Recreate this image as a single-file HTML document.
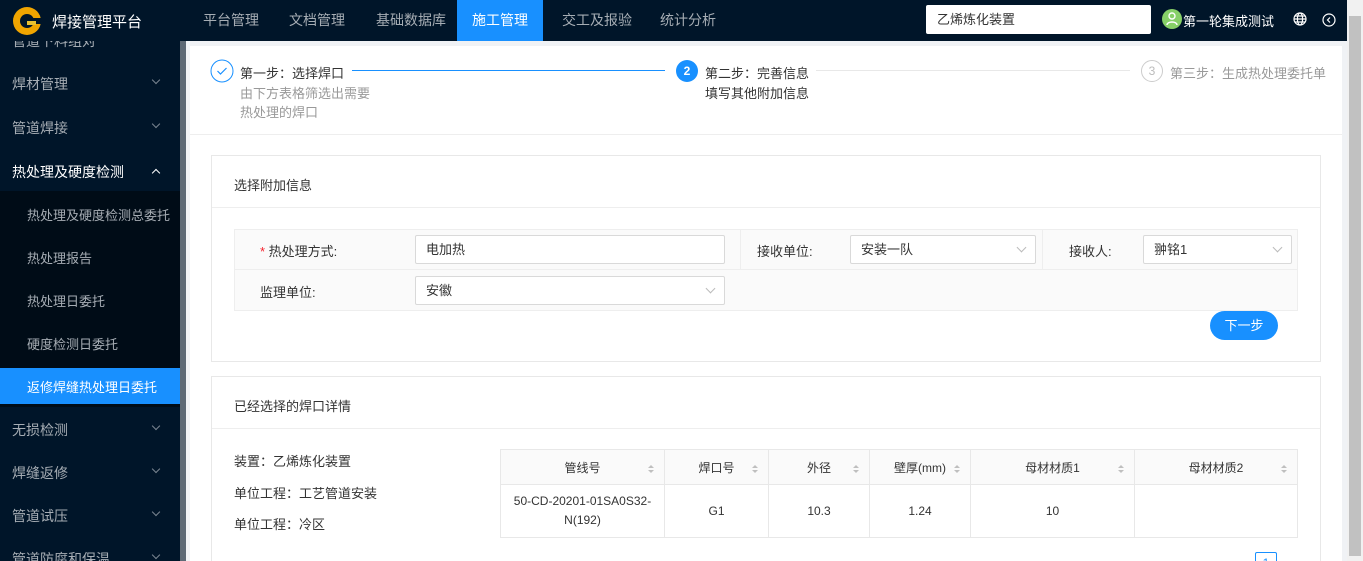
<!DOCTYPE html>
<html><head><meta charset="utf-8"><style>
*{box-sizing:border-box;margin:0;padding:0}
html,body{width:1363px;height:561px;overflow:hidden}
body{background:#f0f2f5;font-family:"Liberation Sans","Noto Sans CJK SC",sans-serif;font-size:13px;color:#333;position:relative}
.abs{position:absolute}
.hdr{left:0;top:0;width:1347px;height:41px;background:#001529}
.nav{top:0;height:41px;line-height:41px;color:#a6adb4;font-size:14px}
.side{left:0;top:41px;width:180px;height:520px;background:#001529;overflow:hidden}
.mi{position:absolute;left:12px;color:#a6adb4;font-size:14px}
.si{position:absolute;left:27px;color:#a6adb4;font-size:13px}
.ar{position:absolute;left:153px;width:6px;height:6px;border-right:1px solid #7a8591;border-bottom:1px solid #7a8591;transform:rotate(45deg)}
.main{left:190px;top:46px;width:1152px;height:515px;background:#fff}
.card{border:1px solid #e8e8e8;background:#fff}
.inp{border:1px solid #d9d9d9;background:#fff;border-radius:2px;height:29px;line-height:27px;padding-left:10px;color:#333}
.dd{position:absolute;right:10px;top:8px;width:7px;height:7px;border-right:1px solid #bbb;border-bottom:1px solid #bbb;transform:rotate(45deg)}
td,th{border:1px solid #e8e8e8;text-align:center;font-weight:normal;font-size:12px;color:#333}
th{background:#fafafa;height:35px;position:relative}
.sort{position:absolute;right:10px;top:12px;width:0;height:0;border:3.5px solid transparent;border-bottom-color:#bfbfbf}
.sort2{position:absolute;right:10px;top:20px;width:0;height:0;border:3.5px solid transparent;border-top-color:#bfbfbf}
</style></head><body>
<div class="abs hdr"></div>
<svg class="abs" style="left:11px;top:5px" width="32" height="32" viewBox="0 0 32 32"><circle cx="16" cy="16" r="14" fill="#f0a500"/><circle cx="16" cy="16" r="7" fill="#001529"/><rect x="16" y="13" width="14" height="6" fill="#001529"/><rect x="16" y="16" width="9" height="4" fill="#e8c030"/></svg>
<div class="abs" style="left:52px;top:11px;color:#fff;font-size:15px">焊接管理平台</div>
<div class="abs nav" style="left:203px">平台管理</div>
<div class="abs nav" style="left:289px">文档管理</div>
<div class="abs nav" style="left:376px">基础数据库</div>
<div class="abs nav" style="left:457px;width:86px;background:#1890ff;color:#fff;text-align:center">施工管理</div>
<div class="abs nav" style="left:562px">交工及报验</div>
<div class="abs nav" style="left:660px">统计分析</div>
<div class="abs" style="left:926px;top:5px;width:225px;height:29px;background:#fff;border-radius:2px;padding-left:11px;line-height:29px;font-size:13px">乙烯炼化装置</div>
<div class="abs" style="left:1162px;top:9px;width:20px;height:20px;border-radius:50%;background:#87d068"></div>
<svg class="abs" style="left:1166px;top:12px" width="12" height="14"><circle cx="6" cy="4" r="3" fill="none" stroke="#fff" stroke-width="1.4"/><path d="M1 13c0-4 10-4 10 0" fill="none" stroke="#fff" stroke-width="1.4"/></svg>
<div class="abs" style="left:1183px;top:11px;color:#fff;font-size:13px">第一轮集成测试</div>
<svg class="abs" style="left:1293px;top:12px" width="14" height="14" viewBox="0 0 14 14" fill="none" stroke="#fff" stroke-width="1.2"><circle cx="7" cy="7" r="6"/><ellipse cx="7" cy="7" rx="2.6" ry="6"/><path d="M1 7h12M2 4h10M2 10h10"/></svg>
<svg class="abs" style="left:1322px;top:13px" width="14" height="14" viewBox="0 0 14 14" fill="none" stroke="#fff" stroke-width="1.2"><circle cx="7" cy="7" r="6"/><path d="M8 4.5L5.5 7 8 9.5"/></svg>
<div class="abs" style="left:1347px;top:0;width:16px;height:561px;background:#f1f1f1"></div>
<div class="abs" style="left:1349px;top:16px;width:12px;height:540px;background:#c1c1c1"></div>
<div class="abs side">
<div class="mi" style="top:-10px">管道下料组对</div>
<div class="mi" style="top:33px">焊材管理</div><div class="ar" style="top:36px"></div>
<div class="mi" style="top:77px">管道焊接</div><div class="ar" style="top:80px"></div>
<div class="mi" style="top:121px;color:#fff">热处理及硬度检测</div><div class="ar" style="top:129px;transform:rotate(225deg);border-color:#fff"></div>
<div style="position:absolute;left:0;top:150px;width:180px;height:216px;background:#000c17"></div>
<div class="si" style="top:164px">热处理及硬度检测总委托</div>
<div class="si" style="top:207px">热处理报告</div>
<div class="si" style="top:250px">热处理日委托</div>
<div class="si" style="top:293px">硬度检测日委托</div>
<div style="position:absolute;left:0;top:327px;width:180px;height:36px;background:#1890ff"></div>
<div class="si" style="top:336px;color:#fff">返修焊缝热处理日委托</div>
<div class="mi" style="top:379px">无损检测</div><div class="ar" style="top:382px"></div>
<div class="mi" style="top:422px">焊缝返修</div><div class="ar" style="top:425px"></div>
<div class="mi" style="top:465px">管道试压</div><div class="ar" style="top:468px"></div>
<div class="mi" style="top:508px">管道防腐和保温</div><div class="ar" style="top:511px"></div>
</div>
<div class="abs" style="left:180px;top:41px;width:6px;height:520px;background:#5d6975"></div>
<div class="abs main"></div>
<svg class="abs" style="left:210px;top:59px" width="24" height="24"><circle cx="12" cy="12" r="11" fill="#fff" stroke="#1890ff"/><path d="M7.5 12l3 3 6-6" fill="none" stroke="#1890ff" stroke-width="1.2"/></svg>
<div class="abs" style="left:240px;top:63px;color:#333">第一步：选择焊口</div>
<div class="abs" style="left:240px;top:83px;color:#999">由下方表格筛选出需要</div>
<div class="abs" style="left:240px;top:102px;color:#999">热处理的焊口</div>
<div class="abs" style="left:352px;top:70px;width:313px;height:1px;background:#1890ff"></div>
<div class="abs" style="left:676px;top:60px;width:22px;height:22px;border-radius:50%;background:#1890ff;color:#fff;text-align:center;line-height:22px;font-size:12px;font-weight:bold">2</div>
<div class="abs" style="left:705px;top:63px;color:#333">第二步：完善信息</div>
<div class="abs" style="left:705px;top:83px;color:#333">填写其他附加信息</div>
<div class="abs" style="left:816px;top:70px;width:314px;height:1px;background:#e8e8e8"></div>
<div class="abs" style="left:1141px;top:60px;width:22px;height:22px;border-radius:50%;border:1px solid #ccc;color:#bbb;text-align:center;line-height:20px;font-size:12px">3</div>
<div class="abs" style="left:1170px;top:63px;color:#999">第三步：生成热处理委托单</div>
<div class="abs" style="left:190px;top:134px;width:1152px;height:1px;background:#eee"></div>
<div class="abs card" style="left:211px;top:155px;width:1110px;height:207px"></div>
<div class="abs" style="left:212px;top:207px;width:1108px;height:1px;background:#eee"></div>
<div class="abs" style="left:234px;top:175px;font-size:13px">选择附加信息</div>
<div class="abs" style="left:234px;top:229px;width:1064px;height:82px;background:#fafafa;border:1px solid #eee"></div>
<div class="abs" style="left:235px;top:269px;width:1062px;height:1px;background:#eee"></div>
<div class="abs" style="left:740px;top:230px;width:1px;height:39px;background:#eee"></div>
<div class="abs" style="left:1042px;top:230px;width:1px;height:39px;background:#eee"></div>
<div class="abs" style="left:260px;top:241px"><span style="color:#f5222d">*</span> 热处理方式:</div>
<div class="abs inp" style="left:415px;top:235px;width:310px">电加热</div>
<div class="abs" style="left:757px;top:241px">接收单位:</div>
<div class="abs inp" style="left:850px;top:235px;width:186px">安装一队<i class="dd"></i></div>
<div class="abs" style="left:1069px;top:241px">接收人:</div>
<div class="abs inp" style="left:1143px;top:235px;width:149px">翀铭1<i class="dd"></i></div>
<div class="abs" style="left:260px;top:282px">监理单位:</div>
<div class="abs inp" style="left:415px;top:276px;width:310px">安徽<i class="dd"></i></div>
<div class="abs" style="left:1210px;top:311px;width:68px;height:29px;border-radius:15px;background:#1890ff;color:#fff;text-align:center;line-height:29px">下一步</div>
<div class="abs card" style="left:211px;top:376px;width:1110px;height:185px;border-bottom:none"></div>
<div class="abs" style="left:212px;top:428px;width:1108px;height:1px;background:#eee"></div>
<div class="abs" style="left:234px;top:396px">已经选择的焊口详情</div>
<div class="abs" style="left:234px;top:451px">装置：乙烯炼化装置</div>
<div class="abs" style="left:234px;top:483px">单位工程：工艺管道安装</div>
<div class="abs" style="left:234px;top:514px">单位工程：冷区</div>
<table class="abs" style="left:500px;top:449px;width:798px;border-collapse:collapse">
<tr><th style="width:164px">管线号<i class="sort"></i><i class="sort2"></i></th><th style="width:104px">焊口号<i class="sort"></i><i class="sort2"></i></th><th style="width:101px">外径<i class="sort"></i><i class="sort2"></i></th><th style="width:101px">壁厚(mm)<i class="sort"></i><i class="sort2"></i></th><th style="width:164px">母材材质1<i class="sort"></i><i class="sort2"></i></th><th>母材材质2<i class="sort"></i><i class="sort2"></i></th></tr>
<tr style="height:53px"><td style="line-height:19px">50-CD-20201-01SA0S32-<br>N(192)</td><td>G1</td><td>10.3</td><td>1.24</td><td>10</td><td></td></tr>
</table>
<div class="abs" style="left:1255px;top:552px;width:22px;height:22px;border:1px solid #1890ff;border-radius:2px;color:#1890ff;text-align:center;font-size:12px;line-height:20px">1</div>
</body></html>
